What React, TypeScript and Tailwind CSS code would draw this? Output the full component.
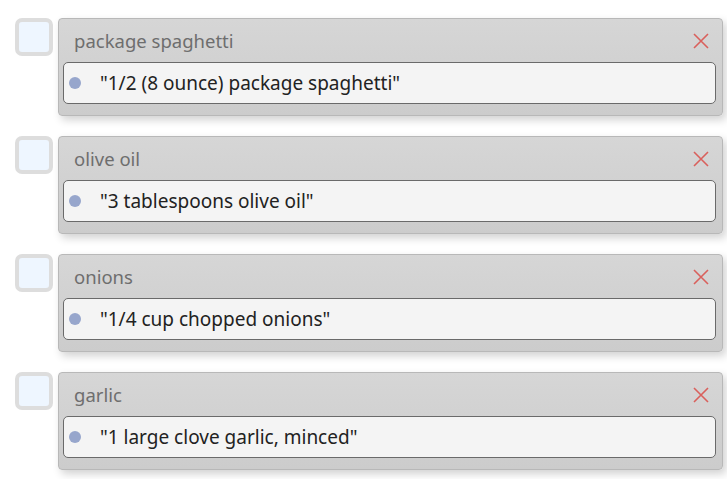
const items = [
  { name: "package spaghetti", text: '"1/2 (8 ounce) package spaghetti"' },
  { name: "olive oil", text: '"3 tablespoons olive oil"' },
  { name: "onions", text: '"1/4 cup chopped onions"' },
  { name: "garlic", text: '"1 large clove garlic, minced"' },
];

function CloseIcon() {
  return (
    <svg width="18" height="18" viewBox="0 0 18 18" fill="none">
      <path d="M2 2 L16 16 M16 2 L2 16" stroke="#d9605c" strokeWidth="1.6" />
    </svg>
  );
}

export default function App() {
  return (
    <div
      className="w-[727px] h-[479px] bg-white pt-[18px] pl-[15px] pr-[4px] flex flex-col gap-[20px]"
      style={{ fontFamily: '"Noto Sans", "Open Sans", sans-serif' }}
    >
      {items.map((item) => (
        <div key={item.name} className="flex items-start gap-[5px]">
          {/* checkbox */}
          <div className="w-[38px] h-[38px] shrink-0 rounded-[7px] border-[4px] border-[#dddddd] bg-[#eef6ff]" />

          {/* card */}
          <div className="flex-1 rounded-[4px] border border-[#b8b8b8] bg-gradient-to-b from-[#d6d6d6] to-[#cccccc] px-[4px] pb-[11px] shadow-[3px_4px_8px_rgba(0,0,0,0.18)]">
            <div className="h-[43px] flex items-center justify-between pl-[11px] pr-[8px]">
              <span className="text-[18.5px] text-[#6e6e6e]">{item.name}</span>
              <CloseIcon />
            </div>
            <div className="h-[42px] flex items-center rounded-[5px] border border-[#6a6a6a] bg-[#f4f4f4] pl-[5px] mr-[2px]">
              <span className="w-[12px] h-[12px] rounded-full bg-[#97a6cc]" />
              <span className="ml-[19px] text-[19px] text-[#222222]">{item.text}</span>
            </div>
          </div>
        </div>
      ))}
    </div>
  );
}
